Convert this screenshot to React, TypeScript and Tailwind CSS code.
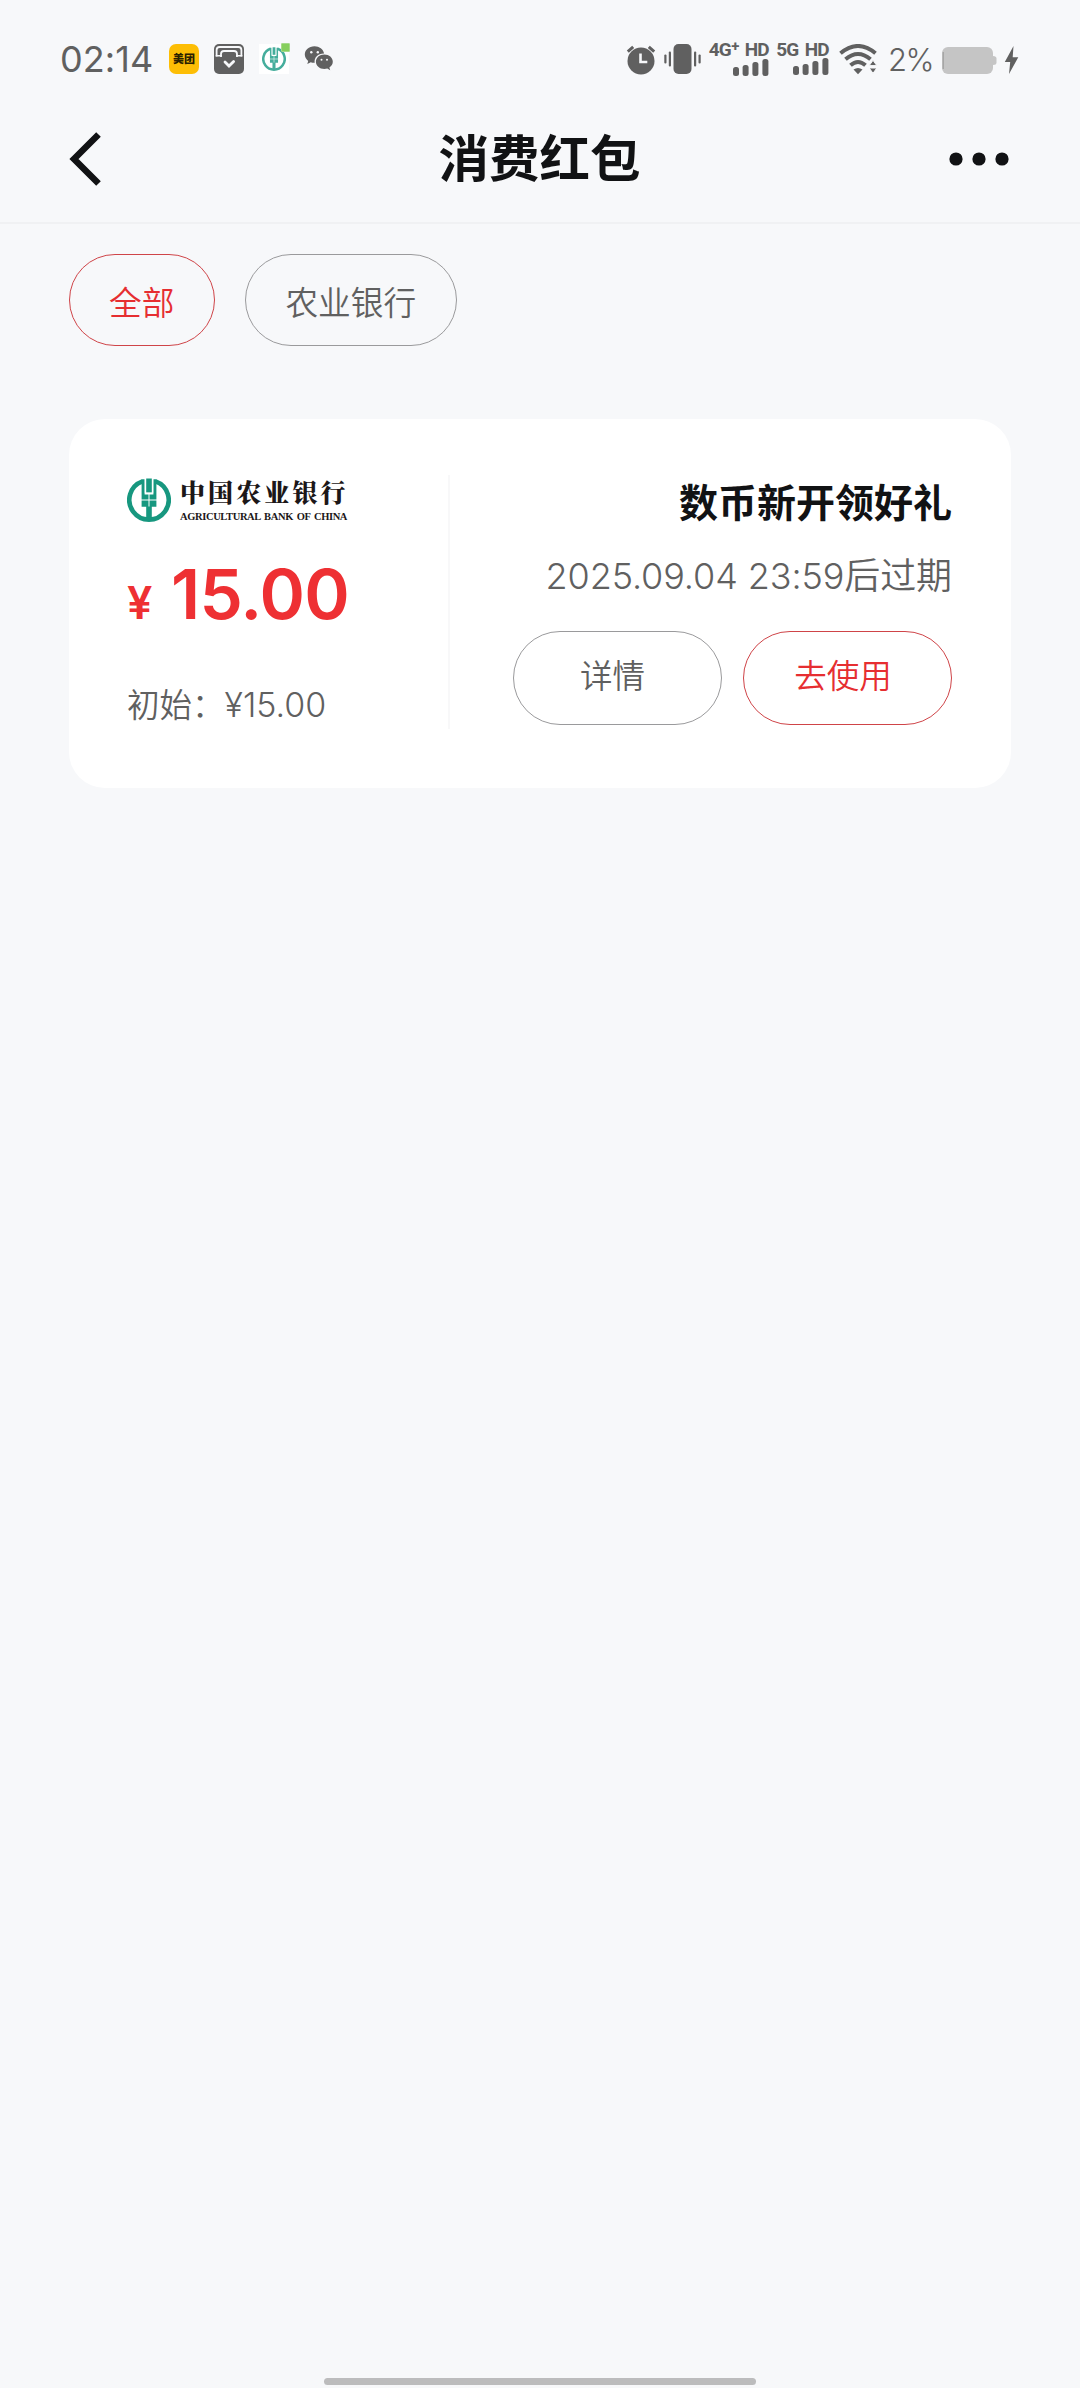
import React, { useState } from "react";

const SignalBars = () => (
  <svg width="36" height="17" viewBox="0 0 36 17" fill="#606060">
    <rect x="0" y="8" width="6" height="9" rx="2.5" />
    <rect x="9.6" y="6" width="6" height="11" rx="2.5" />
    <rect x="19.4" y="3" width="6" height="14" rx="2.5" />
    <rect x="29.4" y="0" width="6" height="17" rx="2.5" />
  </svg>
);

const BankEmblem = ({ size, color }: { size: number; color: string }) => (
  <svg width={size} height={size} viewBox="0 0 44 44">
    <path
      d="M15.5 3.3A19.700 19.700 0 1 0 28.500 3.3"
      fill="none"
      stroke={color}
      strokeWidth="4.6"
    />
    <g fill={color}>
      <path d="M14.600 1.200h3v15.300h8.800V1.200h3v27.600h-4.600v12.400h-5.600V28.800h-4.600z" />
      <path d="M19.2 0.500h5.6v14h-5.6z" />
    </g>
    <path
      d="M18.300 0v15.200h7.400V0M22 15.500v13M14 22h16"
      fill="none"
      stroke="#fff"
      strokeWidth="1"
    />
  </svg>
);

const StatusBar = () => (
  <div className="flex h-24 items-start pl-[60px] pr-[61px] pt-[44px] text-[#606060]">
    <div className="w-[109px] whitespace-nowrap text-[36px] leading-[30px] tracking-[0.1px]">
      02:14
    </div>
    <div className="flex items-start gap-[15px]">
      <div className="flex h-[30px] w-[30px] items-center justify-center rounded-[7px] bg-[#fdbe05] text-[11px] font-black leading-none text-[#2b2100]">
        美团
      </div>
      <svg width="30" height="30" viewBox="0 0 30 30">
        <rect width="30" height="30" rx="5" fill="#606060" />
        <path
          d="M2.600 12.500V6q0-3 3-3h18.800q3 0 3 3v6.500"
          fill="none"
          stroke="#f7f8fa"
          strokeWidth="1.800"
        />
        <path
          d="M7 13V10q0-3 3-3h10q3 0 3 3v3"
          fill="none"
          stroke="#f7f8fa"
          strokeWidth="1.800"
        />
        <path d="M1.700 11.800h6.200M22.100 11.800h6.200" stroke="#f7f8fa" strokeWidth="1.400" />
        <path
          d="M11 18l4 4 4.6-4.6"
          fill="none"
          stroke="#f7f8fa"
          strokeWidth="2.8"
          strokeLinecap="round"
        />
      </svg>
      <div className="relative flex h-[30px] w-[30px] items-center justify-center bg-white">
        <BankEmblem size={24} color="#45ad9c" />
        <span className="absolute -right-px -top-px h-[9px] w-[9px] rounded-[1px] border border-[#a5d98a] bg-[#86cf5d]" />
      </div>
      <svg width="30" height="30" viewBox="0 0 30 30" fill="#606060">
        <path d="M10.5 2.2C4.8 2.2.8 6 .8 10.5c0 2.600 1.300 4.800 3.400 6.400L3.300 20l3.500-1.800c1.200.4 2.500.6 3.900.5-.9-5.400 3.600-9.500 9.400-9.300C19.300 5.200 15.300 2.200 10.500 2.200z" />
        <path d="M20.400 10.600c-4.900 0-8.500 3.200-8.500 7.200s3.600 7.200 8.500 7.200c1 0 2-.2 2.900-.4l2.900 1.600-.8-2.700c2-1.300 3.400-3.300 3.400-5.700 0-4-3.700-7.200-8.400-7.200z" />
        <g fill="#f7f8fa">
          <circle cx="7.300" cy="8.300" r="1.200" />
          <circle cx="13.800" cy="8.300" r="1.200" />
          <circle cx="17.500" cy="15.700" r="1" />
          <circle cx="23" cy="15.700" r="1" />
        </g>
      </svg>
    </div>

    <div className="ml-auto flex items-start">
      <svg width="30" height="31" viewBox="0 0 30 31">
        <circle cx="15" cy="17" r="13.500" fill="#606060" />
        <path
          d="M1.800 7.600l5.400-4.800M28.200 7.600l-5.400-4.800"
          stroke="#606060"
          strokeWidth="3"
        />
        <path d="M14.500 9.500v8.500h6.800" fill="none" stroke="#f7f8fa" strokeWidth="2.600" />
      </svg>
      <svg className="ml-2" width="37" height="30" viewBox="0 0 37 30" fill="#606060">
        <rect x="9.500" width="18" height="30" rx="5" />
        <rect x="4.800" y="7.500" width="2.200" height="15" rx="1" />
        <rect x="0.300" y="10.500" width="2.200" height="9" rx="1" />
        <rect x="30" y="7.500" width="2.200" height="15" rx="1" />
        <rect x="34.500" y="10.500" width="2.200" height="9" rx="1" />
      </svg>
      <div className="-mt-[3px] ml-[10px] flex w-[58px] flex-col items-end font-['Roboto',sans-serif] text-[19px] font-bold leading-[17px]">
        <span className="whitespace-nowrap tracking-[-0.700px] [word-spacing:2px]">
          4G<sup className="top-[-5px] text-[15px] leading-none">+</sup> HD
        </span>
        <SignalBars />
      </div>
      <div className="-mt-[3px] ml-[10px] flex w-[50px] flex-col items-end font-['Roboto',sans-serif] text-[19px] font-bold leading-[17px]">
        <span className="whitespace-nowrap tracking-[-0.700px] [word-spacing:2px]">5G HD</span>
        <SignalBars />
      </div>
      <svg className="ml-[10px]" width="39" height="31" viewBox="0 0 39 31">
        <g fill="none" stroke="#606060" strokeWidth="4">
          <path d="M1.500 9.300Q19 -5.300 36.500 9.300" />
          <path d="M6.500 15.300Q19 4.700 31.500 15.300" />
          <path d="M11.500 21.300Q19 14.700 26.500 21.300" />
        </g>
        <path d="M14.500 25.600Q19 22.300 23.500 25.600L19 30.300z" fill="#606060" />
        <path
          d="M34 16.300l3.800 5.300h-7.600zM34 29.300l3.800-5.300h-7.600z"
          fill="#606060"
          stroke="#f7f8fa"
          strokeWidth="1"
        />
      </svg>
      <span className="ml-[10px] mt-px w-[54px] text-[31px] font-light leading-[30px] tracking-[-1.500px]">
        2%
      </span>
      <svg className="mt-[3px]" width="55" height="27" viewBox="0 0 55 27" fill="#c5c5c5">
        <rect width="51" height="27" rx="6" />
        <path d="M51 9q3.500 0 3.500 2.500v4q0 2.500-3.500 2.500z" />
        <path d="M1.200 5v17" stroke="#999" strokeWidth="1" />
      </svg>
      <svg className="ml-[7px] mt-[2px]" width="15" height="28" viewBox="0 0 15 28">
        <path d="M9.500 0L.8 16h5.400L5 28l9.300-16.800H8.700z" fill="#606060" />
      </svg>
    </div>
  </div>
);

const Header = () => (
  <header className="flex h-[128px] items-start justify-between border-b-2 border-[#f0f1f3] pl-[69px] pr-[70px] pt-[36px]">
    <svg width="80" height="54" viewBox="0 0 80 54">
      <path d="M29.500 2.500L5 27l24.500 24.500" fill="none" stroke="#111214" strokeWidth="6.500" />
    </svg>
    <h1 className="text-[50.500px] font-bold leading-[54px] text-[#111214]">
      消费红包
    </h1>
    <svg width="80" height="54" viewBox="0 0 80 54" fill="#111214">
      <circle cx="26" cy="27" r="6.600" />
      <circle cx="49" cy="27" r="6.600" />
      <circle cx="72" cy="27" r="6.600" />
    </svg>
  </header>
);

const App = () => {
  const filters = ["全部", "农业银行"];
  const [activeFilter, setActiveFilter] = useState("全部");

  return (
    <div className="flex h-[2388px] w-[1080px] flex-col bg-[#f7f8fa] font-['Inter','Noto_Sans_CJK_SC',sans-serif]">
      <StatusBar />
      <Header />

      {/* Filters */}
      <div className="flex gap-[30px] pl-[69px] pt-[30px]">
        {filters.map((filter) => (
          <button
            key={filter}
            onClick={() => setActiveFilter(filter)}
            className={`h-[92px] rounded-full border pl-[39px] pr-[40px] pt-[6px] text-[32.700px] font-[350] leading-none ${
              activeFilter === filter
                ? "border-[#cf4448] text-[#e62e31]"
                : "border-[#9a9a9c] text-[#606060]"
            }`}
          >
            {filter}
          </button>
        ))}
      </div>

      {/* Coupon card */}
      <div className="mx-[69px] mt-[73px] flex h-[369px] rounded-[36px] bg-white pl-[58px] pr-[59px] pt-[56px]">
        <div className="flex h-[254px] w-[323px] flex-col border-r-2 border-[#f8f8f9]">
          <div className="flex pt-[3px]">
            <BankEmblem size={44} color="#17977f" />
            <div className="-mt-0.5 ml-[9px] flex flex-col whitespace-nowrap text-[#1c1718]">
              <span className="font-['Noto_Serif_CJK_SC','Noto_Sans_CJK_SC',serif] text-[25px] font-black leading-[30px] tracking-[3.100px]">
                中国农业银行
              </span>
              <span className="mt-[5px] font-['Liberation_Serif',serif] text-[10.500px] font-bold leading-[12px] tracking-[-0.370px] [word-spacing:1.500px]">
                AGRICULTURAL BANK OF CHINA
              </span>
            </div>
          </div>
          <div className="mt-[31px] flex items-baseline whitespace-nowrap font-semibold leading-[80px] text-[#ee3033]">
            <span className="w-[44px] text-[45px]">¥</span>
            <span className="text-[69px] tracking-[-0.800px]">15.00</span>
          </div>
          <div className="mt-[38px] whitespace-nowrap text-[32.500px] font-[350] leading-[48px] text-[#606060]">
            初始：<span className="text-[34px]">¥15.00</span>
          </div>
        </div>

        <div className="flex flex-1 flex-col items-end">
          <h2 className="mt-[4px] text-[39px] font-bold leading-[48px] text-[#111214]">
            数币新开领好礼
          </h2>
          <p className="mt-[23px] whitespace-nowrap text-[36px] font-[350] leading-[52px] tracking-[-0.100px] text-[#606060]">
            2025.09.04 23:59后过期
          </p>
          <div className="mt-[29px] flex gap-[21px]">
            <button className="h-[94px] w-[209px] rounded-full border border-[#9a9a9c] pb-px pr-[10px] text-[32.500px] font-[350] leading-none text-[#606060]">
              详情
            </button>
            <button className="h-[94px] w-[209px] rounded-full border border-[#cf4448] pb-px pr-[9px] text-[32.500px] font-[350] leading-none text-[#e62e31]">
              去使用
            </button>
          </div>
        </div>
      </div>

      {/* Home indicator */}
      <div className="mx-auto mb-[3px] mt-auto h-[7px] w-[432px] rounded-full bg-[#bcbcbd]" />
    </div>
  );
};

export default App;
